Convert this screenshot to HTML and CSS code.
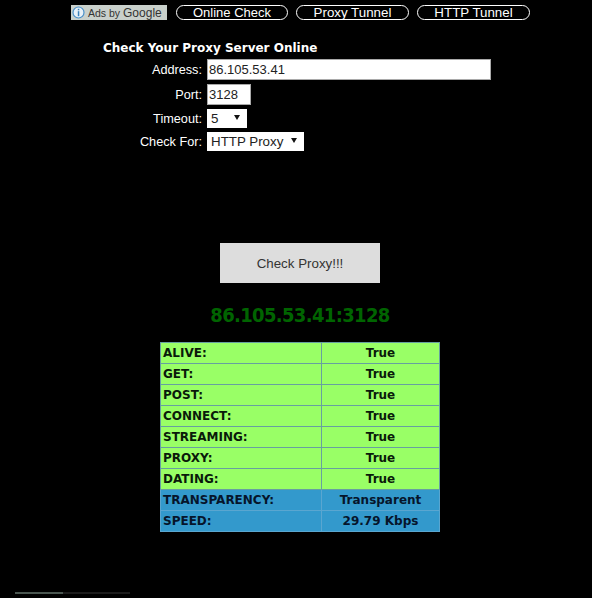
FILE: index.html
```html
<!DOCTYPE html>
<html lang="en">
<head>
    <meta charset="UTF-8">
    <meta name="viewport" content="width=device-width, initial-scale=1.0">
    <title>Check Your Proxy Server Online</title>
    <link rel="stylesheet" href="styles.css">
</head>
<body>
    <div class="nav">
        <div class="ads">
            <svg class="ads-icon" width="13" height="13" viewBox="0 0 13 13">
                <circle cx="6.5" cy="6.5" r="5.5" fill="#e8f1f8" stroke="#4a90c8" stroke-width="1.2"/>
                <rect x="5.8" y="2.8" width="1.5" height="1.5" fill="#3a80b8"/>
                <rect x="5.8" y="5.2" width="1.5" height="5" fill="#3a80b8"/>
            </svg>
            <span>Ads by <span class="ads-google">Google</span></span>
        </div>
        <a class="pill pill-online" href="#">Online Check</a>
        <a class="pill pill-proxy" href="#">Proxy Tunnel</a>
        <a class="pill pill-http" href="#">HTTP Tunnel</a>
    </div>

    <form class="form">
        <h4 class="form-title">Check Your Proxy Server Online</h4>

        <div class="row row-address">
            <label for="address" class="label">Address:</label>
            <input type="text" id="address" class="input-text input-address" value="86.105.53.41">
        </div>
        <div class="row row-port">
            <label for="port" class="label">Port:</label>
            <input type="text" id="port" class="input-text input-port" value="3128">
        </div>
        <div class="row row-timeout">
            <label for="timeout" class="label">Timeout:</label>
            <span class="select-wrap select-timeout">
                <select id="timeout" class="select">
                    <option>5</option>
                    <option>10</option>
                </select>
            </span>
        </div>
        <div class="row">
            <label for="check" class="label">Check For:</label>
            <span class="select-wrap select-check">
                <select id="check" class="select">
                    <option>HTTP Proxy</option>
                    <option>SOCKS</option>
                </select>
            </span>
        </div>

        <button type="button" class="btn-check">Check Proxy!!!</button>
    </form>

    <h2 class="result-title">86.105.53.41:3128</h2>

    <table class="result">
        <tr><th>ALIVE:</th><td>True</td></tr>
        <tr><th>GET:</th><td>True</td></tr>
        <tr><th>POST:</th><td>True</td></tr>
        <tr><th>CONNECT:</th><td>True</td></tr>
        <tr><th>STREAMING:</th><td>True</td></tr>
        <tr><th>PROXY:</th><td>True</td></tr>
        <tr><th>DATING:</th><td>True</td></tr>
        <tr class="blue"><th>TRANSPARENCY:</th><td>Transparent</td></tr>
        <tr class="blue"><th>SPEED:</th><td>29.79 Kbps</td></tr>
    </table>

    <div class="scrollbar">
        <span class="scroll-thumb"></span>
        <span class="scroll-track"></span>
    </div>
</body>
</html>
```

FILE: styles.css
```css
html, body {
    height: 598px;
    overflow: hidden;
}

body {
    margin: 0;
    background-color: #000000;
    color: #ffffff;
    font-family: "Liberation Sans", Arial, sans-serif;
}

/* top links */
.nav {
    display: flex;
    align-items: flex-start;
    padding: 5px 0 0 71px;
    height: 15px;
}

.ads {
    display: flex;
    align-items: center;
    width: 96px;
    height: 15px;
    margin-right: 9px;
    background-color: #c9d0cb;
    color: #333333;
    font-size: 10.5px;
    white-space: nowrap;
}

.ads-google {
    font-size: 12px;
}

.ads-icon {
    margin: 0 3px 0 1px;
    flex: none;
}

.pill {
    box-sizing: border-box;
    height: 15px;
    margin-right: 8px;
    border: 1px solid #ffffff;
    border-radius: 8px;
    color: #ffffff;
    font-size: 13.33px;
    line-height: 13px;
    text-align: center;
    text-decoration: none;
}

.pill-online { width: 112px; font-size: 13px; }
.pill-proxy { width: 113px; }
.pill-http { width: 113px; }

/* form */
.form {
    display: flex;
    flex-direction: column;
    height: 263px;
}

.form-title {
    margin: 20px 0 3px 103px;
    font-family: "DejaVu Sans", Verdana, sans-serif;
    font-size: 12px;
    line-height: 16px;
    font-weight: bold;
}

.row {
    display: flex;
    align-items: center;
    padding-left: 100px;
}

.row-address { height: 21px; margin-bottom: 4px; }
.row-port { height: 21px; margin-bottom: 4px; }
.row-timeout { height: 19px; margin-bottom: 4px; }

.label {
    width: 102px;
    margin-right: 5px;
    font-size: 12.7px;
    text-align: right;
    white-space: nowrap;
}

.input-text {
    box-sizing: border-box;
    height: 21px;
    padding: 0 1px;
    border: 1px solid #a9a9a9;
    background-color: #ffffff;
    color: #222222;
    font-family: inherit;
    font-size: 13px;
}

.input-address { width: 284px; }
.input-port { width: 44px; }

.select-wrap {
    position: relative;
    display: block;
    height: 19px;
}

.select-wrap::after {
    content: "";
    position: absolute;
    top: 6px;
    right: 7px;
    border-top: 5px solid #111111;
    border-left: 3px solid transparent;
    border-right: 3px solid transparent;
}

.select-timeout { width: 40px; }
.select-check { width: 97px; }

.select {
    appearance: none;
    box-sizing: border-box;
    display: block;
    width: 100%;
    height: 19px;
    padding: 0 0 0 4px;
    border: 0;
    border-radius: 0;
    background-color: #ffffff;
    color: #222222;
    font-family: inherit;
    font-size: 13.33px;
}

.btn-check {
    align-self: flex-start;
    width: 160px;
    height: 40px;
    margin: 92px 0 0 220px;
    border: 0;
    background-color: #dddddd;
    color: #333333;
    font-family: inherit;
    font-size: 13.33px;
}

/* result */
.result-title {
    width: 600px;
    margin: 20px 0 15px;
    color: #006400;
    font-family: "DejaVu Sans Condensed", "DejaVu Sans", Verdana, sans-serif;
    font-size: 20px;
    letter-spacing: -0.65px;
    line-height: 24px;
    font-weight: bold;
    text-align: center;
}

.result {
    width: 280px;
    margin-left: 160px;
    border-collapse: collapse;
    table-layout: fixed;
    background-color: #99ff66;
    color: #0a1a0a;
    font-family: "DejaVu Sans", Verdana, sans-serif;
    font-size: 12px;
    font-weight: bold;
}

.result th, .result td {
    height: 20px;
    padding: 0 2px;
    border: 1px solid #66a0a0;
    line-height: 14px;
}

.result th {
    width: 156px;
    text-align: left;
}

.result td {
    text-align: center;
}

.result .blue {
    background-color: #3399cc;
    color: #06152b;
}

.result .blue th, .result .blue td {
    border-color: #5aa6d0;
}

/* bottom edge of the window */
.scrollbar {
    display: flex;
    height: 2px;
    margin: 60px 0 0 15px;
}

.scroll-thumb {
    width: 48px;
    background-color: #4a5650;
}

.scroll-track {
    width: 67px;
    background-color: #1c1c1c;
}
```
